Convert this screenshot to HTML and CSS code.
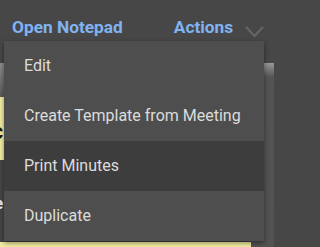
FILE: index.html
```html
<!DOCTYPE html>
<html>
<head>
<meta charset="utf-8">
<link rel="stylesheet" href="styles.css">
</head>
<body>
<div class="page">
  <div class="header">
    <span class="link">Open Notepad</span>
    <span class="link actions">Actions</span>
    <svg class="chev" width="19" height="12" viewBox="0 0 19 12"><polyline points="1,1 9.5,10 18,1" fill="none" stroke="#666" stroke-width="2"/></svg>
  </div>
  <div class="content">
    <div class="main">
      <div class="band"></div>
      <div class="note"><span class="note-text">C</span></div>
      <div class="dark"><span class="white-text">e</span></div>
      <div class="note2"></div>
    </div>
    <div class="side"></div>
  </div>
  <div class="menu">
    <div class="item">Edit</div>
    <div class="item">Create Template from Meeting</div>
    <div class="item active">Print Minutes</div>
    <div class="item">Duplicate</div>
  </div>
</div>
</body>
</html>
```
FILE: styles.css
```css
html, body {
  margin: 0;
  padding: 0;
  background: #474747;
}
body {
  font-family: Roboto, "Noto Sans", sans-serif;
  width: 274px;
  height: 247px;
  overflow: hidden;
}
.page {
  position: relative;
  width: 274px;
  height: 247px;
  overflow: hidden;
}
.header {
  height: 63px;
  box-sizing: border-box;
  padding: 17px 0 0 12px;
  display: flex;
  align-items: flex-start;
}
.link {
  color: #80b3f2;
  font-weight: 700;
  font-size: 17.3px;
  line-height: 20px;
}
.actions {
  margin-left: 51px;
}
.chev {
  margin-left: 12px;
  margin-top: 9px;
}
.content {
  display: flex;
  height: 184px;
}
.main {
  width: 251px;
  display: flex;
  flex-direction: column;
}
.band {
  height: 34px;
  background: linear-gradient(#8e8e8e, #5a5a5a);
}
.note {
  height: 63px;
  background: #f3eea0;
  position: relative;
}
.note-text {
  position: absolute;
  left: -8px;
  top: 26px;
  font-weight: 700;
  font-size: 17px;
  line-height: 20px;
  color: #111;
}
.dark {
  height: 82px;
  background: #464646;
  position: relative;
}
.white-text {
  position: absolute;
  left: -6px;
  top: 33px;
  font-weight: 700;
  font-size: 17px;
  line-height: 20px;
  color: #f0f0f0;
}
.note2 {
  flex: 1;
  background: #f3eea0;
}
.side {
  flex: 1;
  background: linear-gradient(#999 0, #545454 14px, #525252 100%);
}
.menu {
  position: absolute;
  left: 4px;
  top: 41px;
  width: 260px;
  background: #4e4e4e;
  box-shadow: 0 2px 5px rgba(0,0,0,0.45);
}
.item {
  height: 50px;
  line-height: 50px;
  padding-left: 20px;
  font-size: 16px;
  color: #dcdcdc;
  white-space: nowrap;
}
.item.active {
  background: #3d3d3d;
}
```
